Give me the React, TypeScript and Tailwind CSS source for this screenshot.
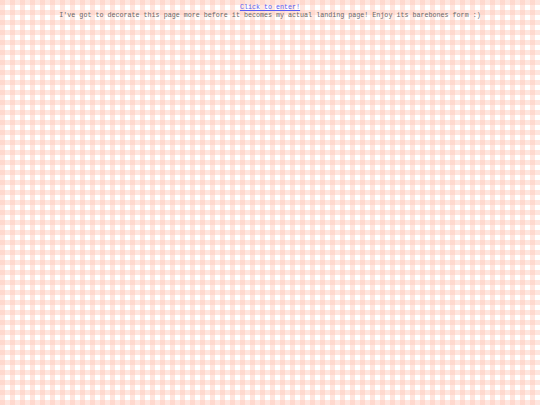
import React from "react";

export default function App() {
  return (
    <div className="min-h-[405px] w-full bg-white bg-[linear-gradient(90deg,rgba(255,200,185,0.45)_45%,rgba(255,200,185,0.3)_50%,transparent_55%),linear-gradient(0deg,transparent_45%,rgba(255,200,185,0.3)_50%,rgba(255,200,185,0.45)_55%)] bg-[length:10px_10px] pt-[4px] text-center font-['Liberation_Mono',monospace] text-[6.7px] leading-[7.6px] text-[#6a6a6a]">
      <a href="#" className="text-[#5a5af0] underline">Click to enter!</a>
      <p>I've got to decorate this page more before it becomes my actual landing page! Enjoy its barebones form :)</p>
    </div>
  );
}
